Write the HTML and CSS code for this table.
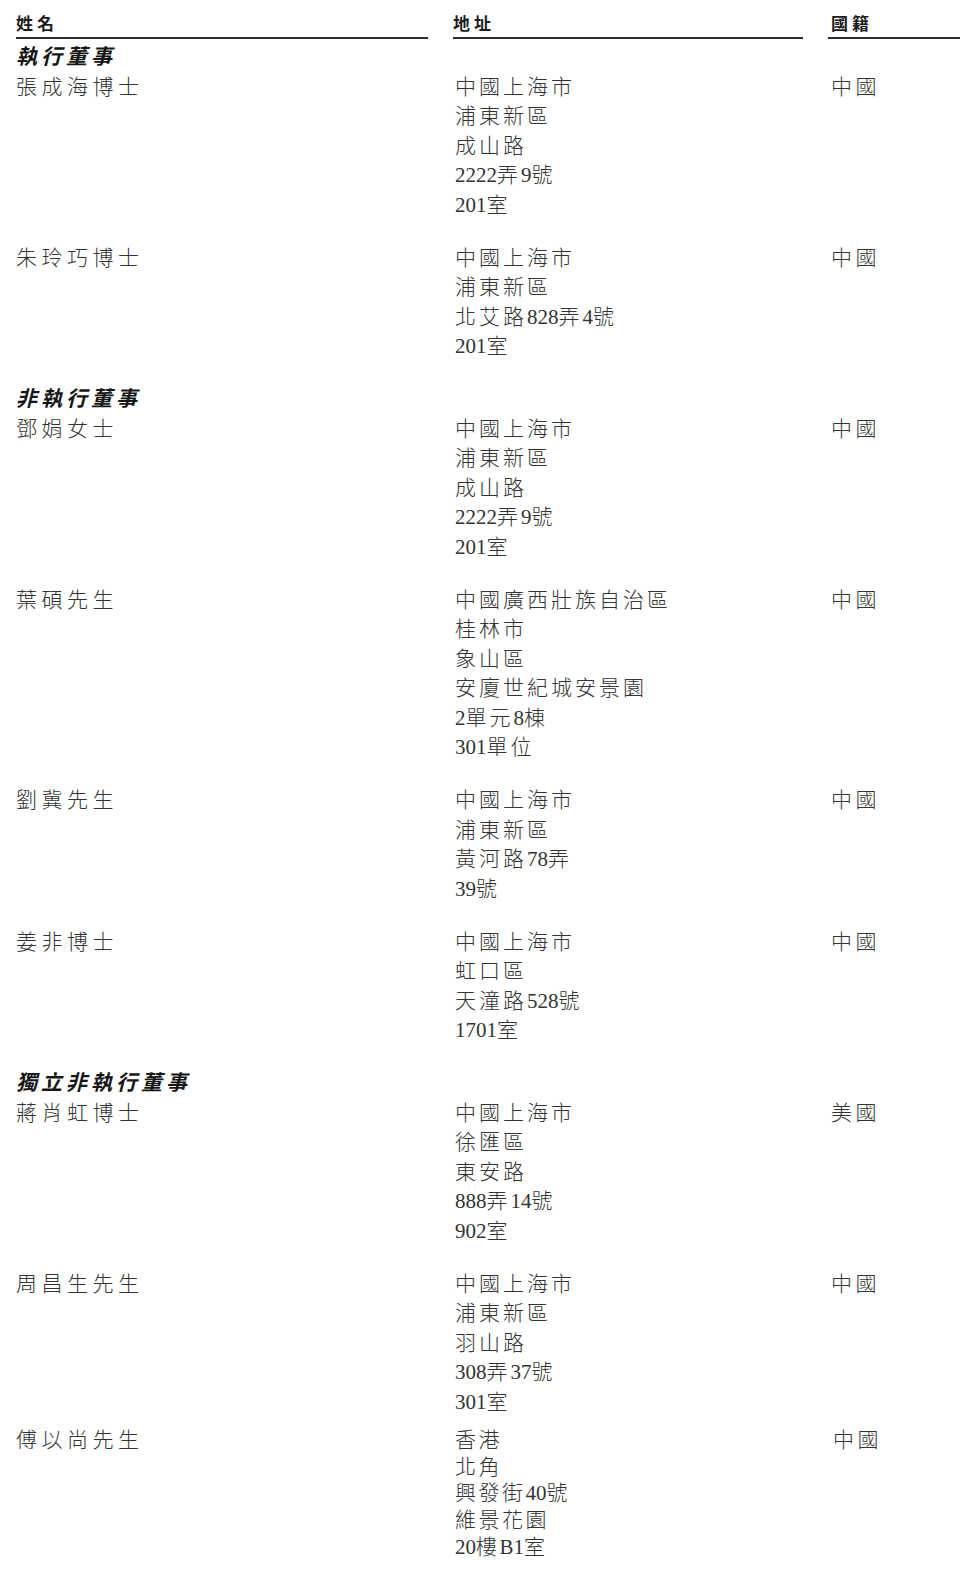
FILE: index.html
```html
<!DOCTYPE html>
<html lang="zh-Hant">
<head>
<meta charset="utf-8">
<title>董事名單</title>
<link rel="stylesheet" href="styles.css">
</head>
<body>
<div class="sheet">
  <div class="row head">
    <div class="hcell">姓名</div>
    <div class="hcell">地址</div>
    <div class="hcell hnat">國籍</div>
  </div>

  <div class="group">
    <div class="section">執行董事</div>
    <div class="row">
      <div class="name">張成海博士</div>
      <div class="addr">
        <div>中國上海市</div>
        <div>浦東新區</div>
        <div>成山路</div>
        <div><span class="n">2222</span>弄<span class="n">9</span>號</div>
        <div><span class="n">201</span>室</div>
      </div>
      <div class="nat">中國</div>
    </div>
    <div class="row">
      <div class="name">朱玲巧博士</div>
      <div class="addr">
        <div>中國上海市</div>
        <div>浦東新區</div>
        <div>北艾路<span class="n">828</span>弄<span class="n">4</span>號</div>
        <div><span class="n">201</span>室</div>
      </div>
      <div class="nat">中國</div>
    </div>
  </div>

  <div class="group">
    <div class="section">非執行董事</div>
    <div class="row">
      <div class="name">鄧娟女士</div>
      <div class="addr">
        <div>中國上海市</div>
        <div>浦東新區</div>
        <div>成山路</div>
        <div><span class="n">2222</span>弄<span class="n">9</span>號</div>
        <div><span class="n">201</span>室</div>
      </div>
      <div class="nat">中國</div>
    </div>
    <div class="row">
      <div class="name">葉碩先生</div>
      <div class="addr">
        <div>中國廣西壯族自治區</div>
        <div>桂林市</div>
        <div>象山區</div>
        <div>安廈世紀城安景園</div>
        <div><span class="n">2</span>單元<span class="n">8</span>棟</div>
        <div><span class="n">301</span>單位</div>
      </div>
      <div class="nat">中國</div>
    </div>
    <div class="row">
      <div class="name">劉冀先生</div>
      <div class="addr">
        <div>中國上海市</div>
        <div>浦東新區</div>
        <div>黃河路<span class="n">78</span>弄</div>
        <div><span class="n">39</span>號</div>
      </div>
      <div class="nat">中國</div>
    </div>
    <div class="row">
      <div class="name">姜非博士</div>
      <div class="addr">
        <div>中國上海市</div>
        <div>虹口區</div>
        <div>天潼路<span class="n">528</span>號</div>
        <div><span class="n">1701</span>室</div>
      </div>
      <div class="nat">中國</div>
    </div>
  </div>

  <div class="group">
    <div class="section">獨立非執行董事</div>
    <div class="row">
      <div class="name">蔣肖虹博士</div>
      <div class="addr">
        <div>中國上海市</div>
        <div>徐匯區</div>
        <div>東安路</div>
        <div><span class="n">888</span>弄<span class="n">14</span>號</div>
        <div><span class="n">902</span>室</div>
      </div>
      <div class="nat">美國</div>
    </div>
    <div class="row">
      <div class="name">周昌生先生</div>
      <div class="addr">
        <div>中國上海市</div>
        <div>浦東新區</div>
        <div>羽山路</div>
        <div><span class="n">308</span>弄<span class="n">37</span>號</div>
        <div><span class="n">301</span>室</div>
      </div>
      <div class="nat">中國</div>
    </div>
    <div class="row compact">
      <div class="name">傅以尚先生</div>
      <div class="addr">
        <div>香港</div>
        <div>北角</div>
        <div>興發街<span class="n">40</span>號</div>
        <div>維景花園</div>
        <div><span class="n">20</span>樓<span class="n">B1</span>室</div>
      </div>
      <div class="nat">中國</div>
    </div>
  </div>
</div>
</body>
</html>
```

FILE: styles.css
```css
html, body {
  margin: 0;
  padding: 0;
  background: #ffffff;
}

body {
  font-family: "Liberation Serif", "Noto Sans CJK TC", serif;
  font-weight: 300;
  color: #333333;
  font-size: 21px;
  line-height: 29.5px;
}

.sheet {
  padding: 13px 0 0 16px;
  overflow: hidden;
}

.row {
  display: grid;
  grid-template-columns: 412px 350px 1fr;
  column-gap: 25px;
}

.head {
  margin-bottom: 4px;
}

.hcell {
  font-size: 17px;
  line-height: 24px;
  font-weight: bold;
  letter-spacing: 4px;
  color: #1c1c1c;
  border-bottom: 2px solid #2e2e2e;
}

.hnat {
  padding-left: 3px;
}

.group {
  display: flex;
  flex-direction: column;
  gap: 23.5px;
}

.group + .group {
  margin-top: 23.5px;
}

.section {
  font-weight: bold;
  font-style: italic;
  letter-spacing: 4px;
  color: #161616;
  margin-bottom: -23.5px;
}

.name {
  letter-spacing: 4.5px;
}

.addr {
  letter-spacing: 3px;
  padding-left: 2px;
}

.nat {
  letter-spacing: 3.5px;
  padding-left: 3px;
}

.n {
  letter-spacing: 0;
}

.compact {
  line-height: 26.7px;
  margin-top: -13.5px;
}

.compact .addr {
  letter-spacing: 2.5px;
}

.compact .nat {
  padding-left: 5px;
}
```
